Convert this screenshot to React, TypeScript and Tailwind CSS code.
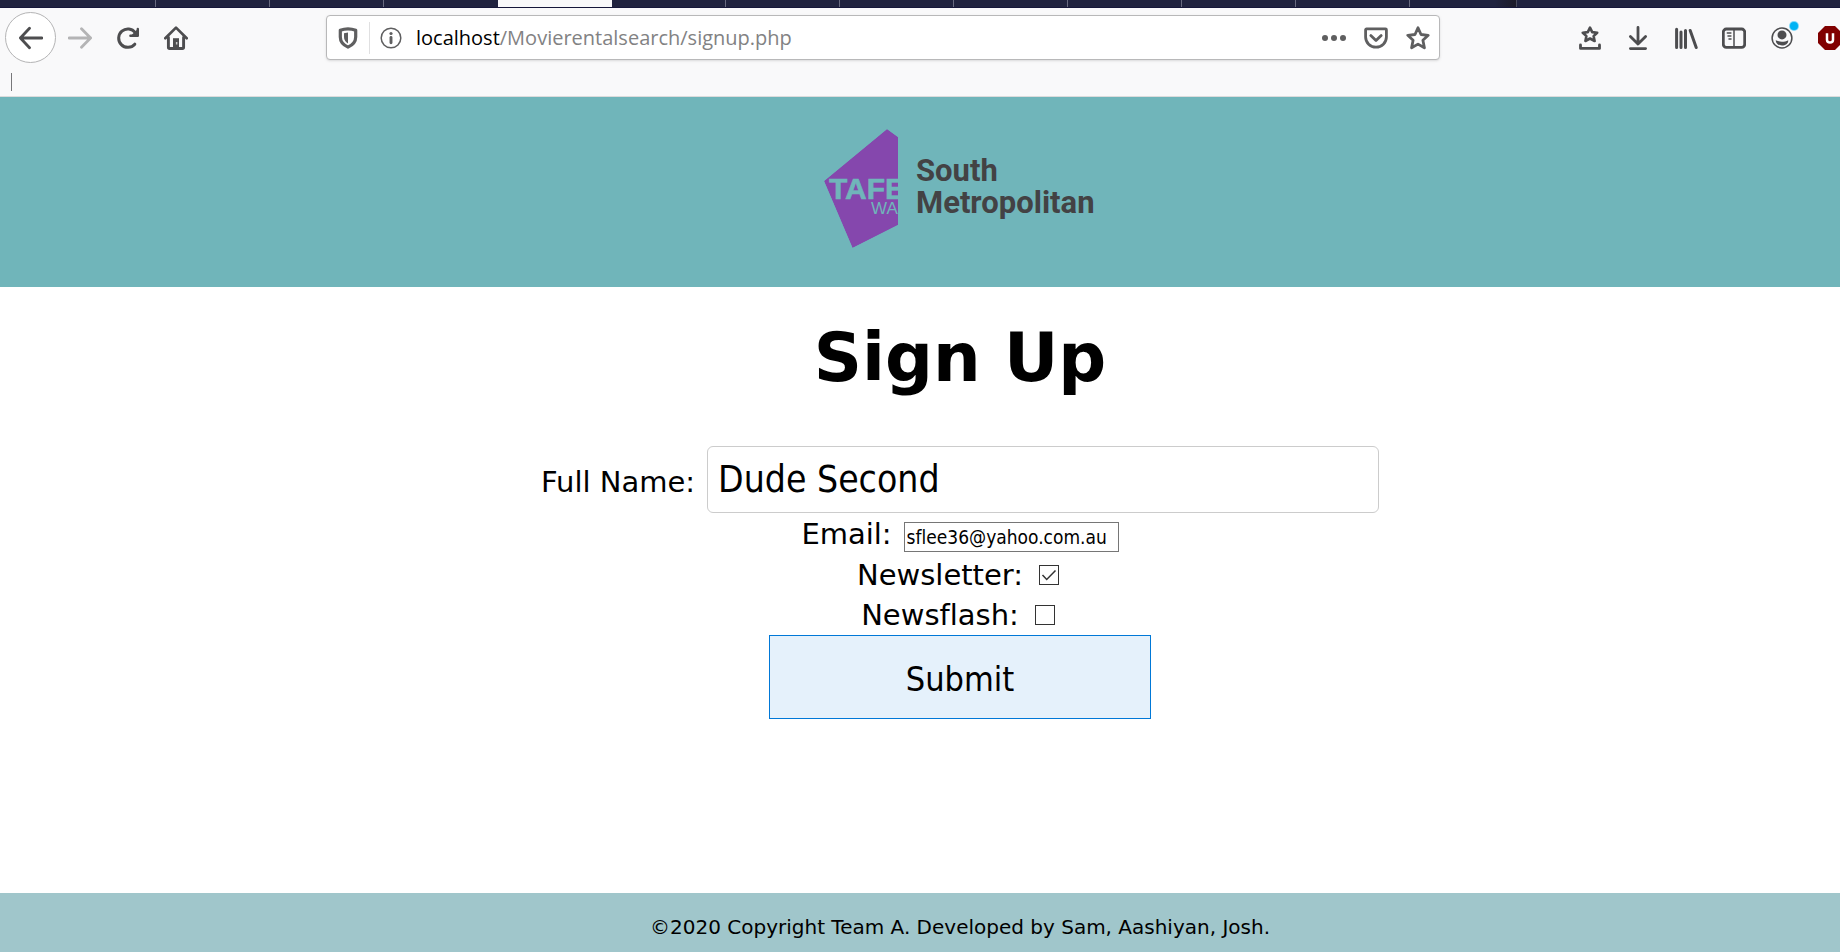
import type { ReactNode } from "react";

const line = {
  fill: "none",
  stroke: "currentColor",
  strokeLinecap: "round",
  strokeLinejoin: "round",
} as const;

function Icon({ children, className = "size-6" }: { children: ReactNode; className?: string }) {
  return (
    <svg viewBox="0 0 24 24" className={className} aria-hidden="true">
      {children}
    </svg>
  );
}

function ToolButton({ label, children }: { label: string; children: ReactNode }) {
  return (
    <button type="button" aria-label={label} className="flex h-12 w-12 shrink-0 items-center justify-center">
      {children}
    </button>
  );
}

function TabStrip() {
  return (
    <div className="flex h-2 shrink-0 overflow-hidden border-b border-[#16173a] bg-[#20233f]">
      <div className="w-[156px] shrink-0 border-r border-[#686a80]" />
      <div className="w-[114px] shrink-0 border-r border-[#686a80]" />
      <div className="w-[114px] shrink-0 border-r border-[#686a80]" />
      <div className="w-[114px] shrink-0" />
      <div className="w-[114px] shrink-0 bg-[#f9f9fa]" />
      {[0, 1, 2, 3, 4, 5, 6].map((n) => (
        <div key={n} className="w-[114px] shrink-0 border-r border-[#686a80]" />
      ))}
      <div className="w-[107px] shrink-0 border-r border-[#4a4b5c] bg-linear-to-r from-[#20233f] from-80% to-[#1c1b28]" />
    </div>
  );
}

function AddressBar() {
  return (
    <div className="flex h-[45px] min-w-0 flex-1 items-center rounded-sm border border-[#b8b8b9] bg-white text-[#5f5f60] shadow-sm">
      <button type="button" aria-label="Tracking protection" className="flex w-[42px] justify-center">
        <Icon>
          <path d="M12 2.9C14.8 2.9 17.3 3.4 19.7 4.3V11c0 4.4-3 8-7.700 10.100C7.300 19 4.300 15.400 4.300 11V4.300C6.700 3.400 9.200 2.900 12 2.900Z" {...line} strokeWidth="3.2" />
          <path d="M12 6.600v11C9.500 16 8 13.800 8 11V7.200Z" fill="currentColor" />
        </Icon>
      </button>
      <span className="h-8 w-px bg-[#e0e0e1]" />
      <button type="button" aria-label="Site information" className="flex w-[42px] justify-center">
        <Icon>
          <circle cx="12" cy="12" r="9.8" {...line} strokeWidth="1.500" />
          <circle cx="12" cy="7.500" r="1.600" fill="currentColor" />
          <path d="M12 11.500v5.200" {...line} strokeWidth="2.900" />
        </Icon>
      </button>
      <div className="ml-1 min-w-0 flex-1 truncate pt-px font-['Open_Sans',sans-serif] text-[20px] leading-7 text-[#828283]">
        <span className="text-black">localhost</span>/Movierentalsearch/signup.php
      </div>
      <button type="button" aria-label="Page actions" className="flex w-[42px] justify-center">
        <Icon>
          <circle cx="3" cy="12" r="3" fill="currentColor" />
          <circle cx="12" cy="12" r="3" fill="currentColor" />
          <circle cx="21" cy="12" r="3" fill="currentColor" />
        </Icon>
      </button>
      <button type="button" aria-label="Save to Pocket" className="flex w-[42px] justify-center">
        <Icon>
          <path d="M2.500 2.900H21.500c.5 0 .9.400.9.900V11c0 5.600-4.600 10.100-10.400 10.100S1.600 16.600 1.600 11V3.800c0-.5.400-.9.900-.9Z" {...line} strokeWidth="2.800" />
          <path d="m6.800 9.600 5.200 5 5.200-5" {...line} strokeWidth="2.800" />
        </Icon>
      </button>
      <button type="button" aria-label="Bookmark this page" className="flex w-[42px] justify-center">
        <Icon>
          <path d="M12 1.800 15 8.500 22.200 9.300 16.900 14.200 18.400 21.800 12 18.100 5.600 21.800 7.100 14.200 1.800 9.300 9 8.500Z" {...line} strokeWidth="2.800" />
        </Icon>
      </button>
    </div>
  );
}

function BrowserChrome() {
  return (
    <header className="shrink-0 overflow-hidden border-b border-[#dcdcdc] bg-[#f9f9fa] text-[#4d4d4f]">
      <TabStrip />
      <nav aria-label="Browser toolbar" className="-mr-[14px] flex items-center pt-1 pl-[5px]">
        <button type="button" aria-label="Back" className="flex size-[51px] shrink-0 items-center justify-center rounded-full border border-[#b4b4b5] bg-white">
          <Icon>
            <path d="M10.500 2.200 1.400 12l9.100 9.800M1.400 12H23" {...line} strokeWidth="2.800" />
          </Icon>
        </button>
        <div className="flex shrink-0 text-[#b4b4b5]">
          <ToolButton label="Forward">
            <Icon>
              <path d="m13.500 2.800 9.100 9.200-9.100 9.200M22.600 12H1" {...line} strokeWidth="2.800" />
            </Icon>
          </ToolButton>
        </div>
        <ToolButton label="Reload">
          <Icon>
            <path d="M18.800 18.200A9.200 9.200 0 1 1 19.300 6.700" {...line} strokeWidth="3" />
            <path d="M21.800 2.900V9.800H14.400" {...line} strokeWidth="2.400" />
            <path d="m21.800 3-7 6.800h7Z" fill="currentColor" />
          </Icon>
        </ToolButton>
        <ToolButton label="Home">
          <Icon>
            <path d="M1.300 12.300 12 1.600l10.700 10.700" {...line} strokeWidth="2.700" />
            <path d="M4.400 11.500V21.300c0 .7.500 1.200 1.200 1.200H18.400c.7 0 1.200-.5 1.200-1.200V11.500" {...line} strokeWidth="2.900" />
            <path d="M9 12.200h6V22H9Z" fill="currentColor" />
            <rect x="11.900" y="16" width="1.500" height="2.500" fill="#c8c8c8" />
          </Icon>
        </ToolButton>
        <div className="w-[126px] shrink" />
        <AddressBar />
        <div className="w-[126px] shrink" />
        <ToolButton label="Show bookmarks">
          <Icon>
            <path d="M12 1.600 14.200 6.100 19.200 6.700 15.600 10.100 16.600 15 12 12.500 7.400 15 8.400 10.100 4.800 6.700 9.800 6.100Z" {...line} strokeWidth="2.600" />
            <path d="M2.500 19v3.400h19V19" {...line} strokeWidth="2.800" />
          </Icon>
        </ToolButton>
        <ToolButton label="Downloads">
          <Icon>
            <path d="M12 1.400v16.400M4.400 10.400l7.600 7.700 7.600-7.700M4.400 22.600h15.200" {...line} strokeWidth="2.800" />
          </Icon>
        </ToolButton>
        <ToolButton label="Library">
          <Icon>
            <path d="M2.600 3.200v18.400M7 6v15.600M11.500 4.500v17.100M16.200 4.500l6 17" {...line} strokeWidth="3" />
          </Icon>
        </ToolButton>
        <ToolButton label="Sidebars">
          <Icon>
            <rect x="1.300" y="3" width="21.400" height="18.300" rx="3" {...line} strokeWidth="2.800" />
            <path d="M12 3v18" {...line} strokeWidth="1.500" />
            <path d="M5.300 7h3.600M6 10h2.900M7 13h2" {...line} strokeWidth="1.500" />
          </Icon>
        </ToolButton>
        <ToolButton label="Account">
          <span className="relative flex">
            <Icon>
              <circle cx="12" cy="12" r="9.900" {...line} strokeWidth="1.500" />
              <circle cx="12" cy="8.900" r="4.500" fill="currentColor" />
              <path d="M5.800 14.200c3.800 2 8.600 2 12.400 0 .3 3-2.500 5.200-6.200 5.200s-6.500-2.200-6.200-5.200Z" fill="currentColor" />
            </Icon>
            <span className="absolute -top-1 -right-1 size-2 rounded-full bg-[#00b3f4] ring-1 ring-[#7fd8f9]" />
          </span>
        </ToolButton>
        <ToolButton label="Content blocker">
          <Icon>
            <path d="M7 0h10l7 7v10l-7 7H7l-7-7V7Z" fill="#800000" />
            <path d="M9 7.200v6.500c0 1.900 1.100 2.800 3 2.800s3-.9 3-2.800V7.200" fill="none" stroke="#fff" strokeWidth="2.500" />
          </Icon>
        </ToolButton>
      </nav>
      <div className="flex h-[33px] items-center pt-1 pl-[11px]">
        <span className="h-[18px] w-px bg-[#77777a]" />
      </div>
    </header>
  );
}

function Logo() {
  return (
    <svg viewBox="0 0 272 120" className="h-[120px] w-[272px]" role="img" aria-label="TAFE WA South Metropolitan">
      <defs>
        <clipPath id="badge">
          <path d="M0 52 63 0 74 8V96L28.500 119Z" />
        </clipPath>
      </defs>
      <g clipPath="url(#badge)">
        <path d="M0 52 63 0 74 8V96L28.500 119Z" fill="#8547ad" />
        <text x="5" y="70" fill="#70b5ba" stroke="#70b5ba" strokeWidth="0.6" fontFamily="Liberation Sans, sans-serif" fontWeight="700" fontSize="30">TAFE</text>
        <text x="47" y="84.500" fill="#70b5ba" fontFamily="Liberation Sans, sans-serif" fontSize="17">WA</text>
      </g>
      <g fill="#434244" fontFamily="Roboto, sans-serif" fontWeight="700" fontSize="31">
        <text x="92" y="52">South</text>
        <text x="92" y="84">Metropolitan</text>
      </g>
    </svg>
  );
}

function CheckRow({ id, label, checked }: { id: string; label: string; checked?: boolean }) {
  return (
    <div className="flex h-10 items-center justify-center">
      <label htmlFor={id}>{label}</label>
      <span className="relative mr-1 ml-4 flex">
        <input
          id={id}
          type="checkbox"
          defaultChecked={checked}
          className="peer size-5 appearance-none border border-[#333333] bg-white"
        />
        <svg viewBox="0 0 20 20" className="pointer-events-none absolute inset-0 hidden size-5 peer-checked:block" aria-hidden="true">
          <path d="m3.500 10 4.200 4.500L16.500 5.500" fill="none" stroke="#333333" strokeWidth="1.500" />
        </svg>
      </span>
    </div>
  );
}

export default function App() {
  return (
    <div className="flex min-h-screen flex-col overflow-x-hidden bg-white font-['DejaVu_Sans',sans-serif] text-black [font-variant-ligatures:none]">
      <BrowserChrome />
      <div className="-mr-20 flex flex-1 flex-col">
        <div className="flex h-[190px] shrink-0 justify-center bg-[#70b5ba] pt-8">
          <Logo />
        </div>
        <main className="flex flex-1 flex-col items-center pt-[31px]">
          <h1 className="text-[67px] leading-[80px] font-bold">Sign Up</h1>
          <form className="mt-12 flex flex-col items-center text-[29px] leading-10" onSubmit={(e) => e.preventDefault()}>
            <div className="flex items-baseline gap-3">
              <label htmlFor="name">Full Name:</label>
              <input
                id="name"
                type="text"
                defaultValue="Dude Second"
                className="h-[67px] w-[672px] rounded-md border border-[#cccccc] px-[10px] font-['DejaVu_Sans_Condensed','DejaVu_Sans',sans-serif] text-[37px]"
              />
            </div>
            <div className="flex h-[42px] items-baseline gap-3 pt-px">
              <label htmlFor="email">Email:</label>
              <input
                id="email"
                type="email"
                defaultValue="sflee36@yahoo.com.au"
                className="h-[30px] w-[215px] border border-[#767676] px-0.5 font-['DejaVu_Sans_Condensed','DejaVu_Sans',sans-serif] text-[19px]"
              />
            </div>
            <CheckRow id="newsletter" label="Newsletter:" checked />
            <CheckRow id="newsflash" label="Newsflash:" />
            <button
              type="submit"
              className="h-[84px] w-[382px] border border-[#0078d7] bg-[#e5f1fb] pt-1 font-['DejaVu_Sans_Condensed','DejaVu_Sans',sans-serif] text-[34px]"
            >
              Submit
            </button>
          </form>
        </main>
        <footer className="flex h-[59px] shrink-0 items-center justify-center bg-[#a0c6cb] pt-2 text-[20px]">
          ©2020 Copyright Team A. Developed by Sam, Aashiyan, Josh.
        </footer>
      </div>
    </div>
  );
}
